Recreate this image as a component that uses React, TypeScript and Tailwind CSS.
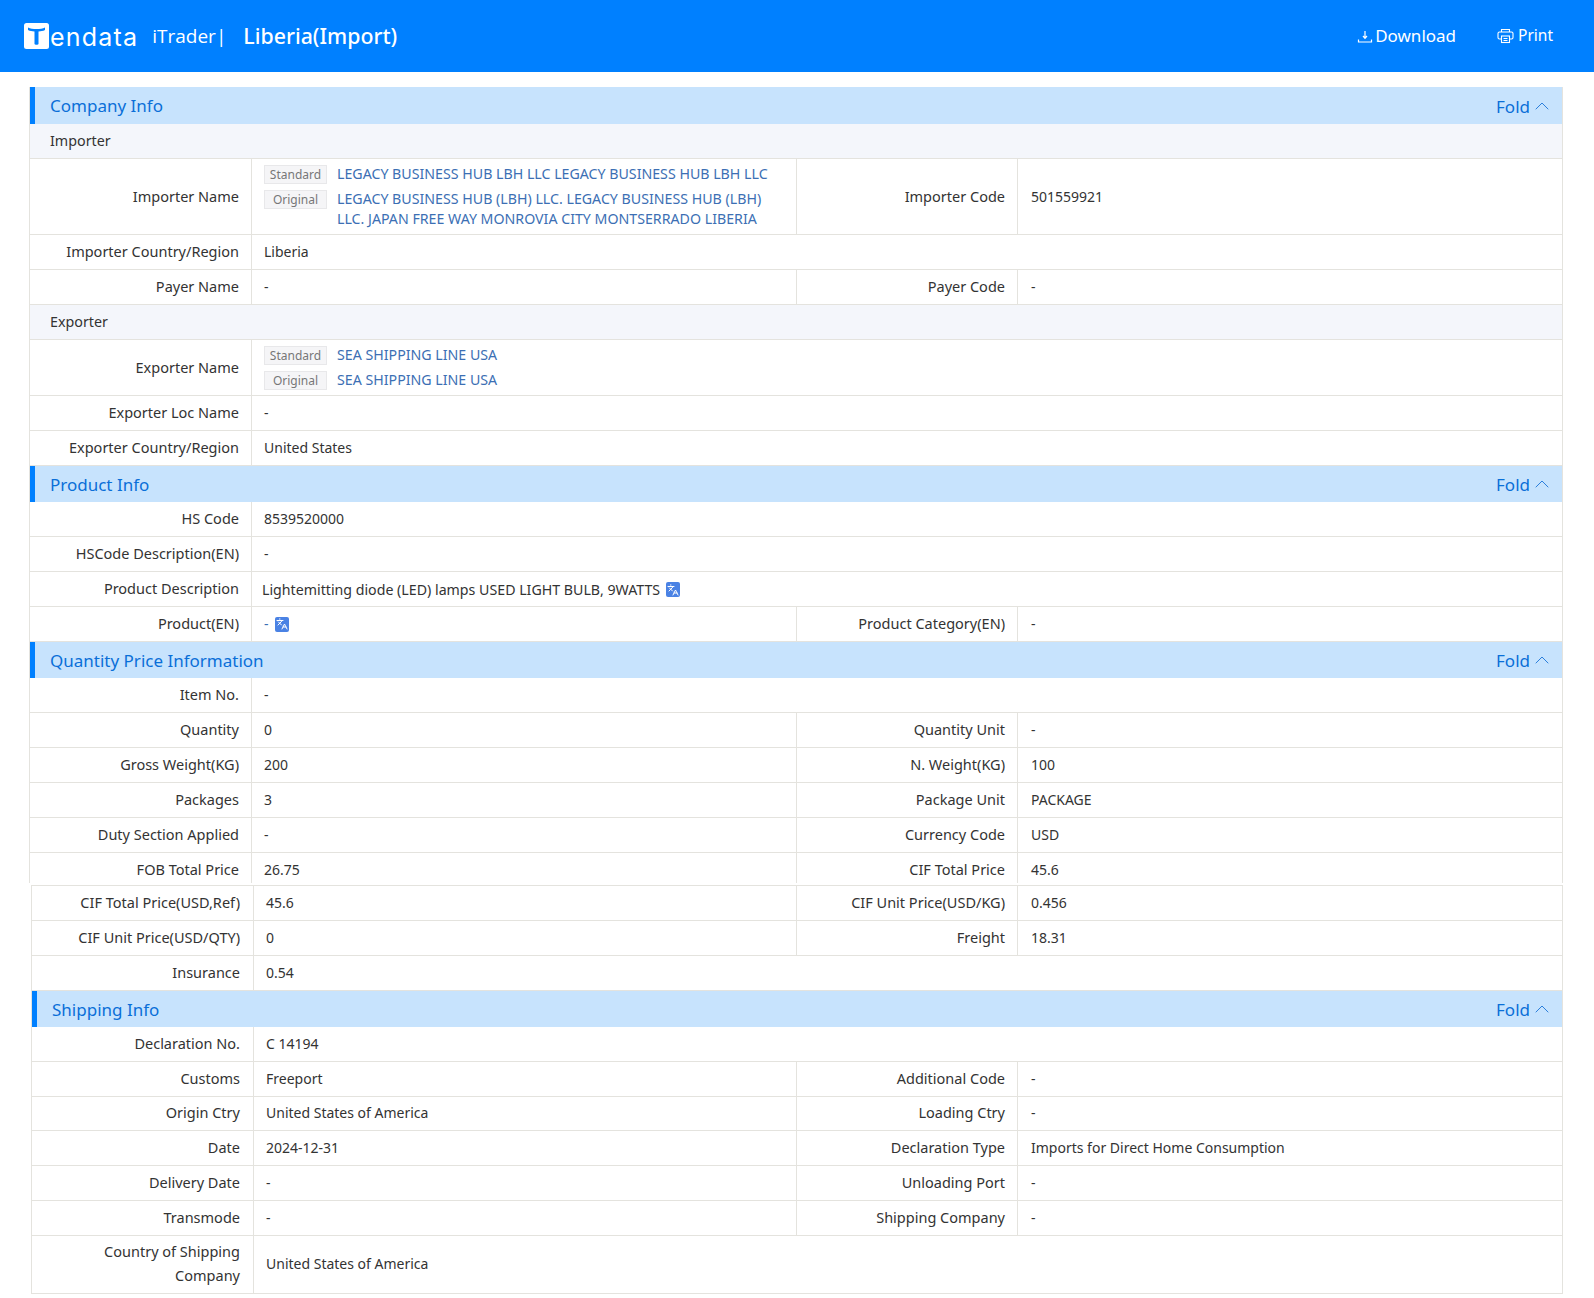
import React from "react";
import { ChevronUp, Languages } from "lucide-react";

const font = { fontFamily: '"Noto Sans", "Open Sans", sans-serif' };

function Fold() {
  return (
    <div className="flex items-center pr-[8px] text-[#0a6fd8]">
      <span className="pt-[2px] text-[17px]">Fold</span>
      <ChevronUp size={24} strokeWidth={1} className="text-[#2b7fdc]" />
    </div>
  );
}

function Head({ title, h = "h-[36px]" }: { title: string; h?: string }) {
  return (
    <div className={`flex items-center justify-between border-l-[5px] border-[#0080ff] bg-[#c7e3fd] pl-[15px] ${h}`}>
      <span className="pt-[1px] text-[17px] text-[#0a6fd8]">{title}</span>
      <Fold />
    </div>
  );
}

function Sub({ title }: { title: string }) {
  return (
    <div className="flex h-[35px] items-center border-b border-[#e4e3de] bg-[#f4f6fb] pl-[20px] text-[14.3px] text-[#333]">
      {title}
    </div>
  );
}

function Label({ text, alt, narrow, pt }: { text: string; alt?: boolean; narrow?: boolean; pt?: boolean }) {
  return (
    <div
      className={`flex shrink-0 items-center justify-end border-r border-[#e4e3de] pl-[30px] text-right text-[14.5px] leading-[24px] text-[#333] ${
        narrow ? "w-[221px] pr-[12px]" : alt ? "w-[222px] pr-[13px]" : "w-[222px] pr-[12px]"
      } ${pt ? "pt-[1px]" : "pb-[2px]"}`}
    >
      <span>{text}</span>
    </div>
  );
}

function Row({
  cells,
  alt,
  h = "h-[35px]",
  last,
}: {
  cells: [string, React.ReactNode][];
  alt?: boolean;
  h?: string;
  last?: boolean;
}) {
  const value = `flex items-center text-[14px] leading-[24px] text-[#333] ${last ? "pt-[3px]" : ""}`;
  return (
    <div className={`flex border-[#e4e3de] ${last ? "" : "border-b"} ${h}`}>
      <Label text={cells[0][0]} alt={alt} pt={last} />
      {cells.length === 1 ? (
        <div className={`${value} min-w-0 flex-1 pl-[12px]`}>{cells[0][1]}</div>
      ) : (
        <>
          <div className={`${value} border-r border-[#e4e3de] pl-[12px] ${alt ? "w-[543px]" : "w-[545px]"}`}>{cells[0][1]}</div>
          <Label text={cells[1][0]} narrow pt={last} />
          <div className={`${value} min-w-0 flex-1 pl-[13px]`}>{cells[1][1]}</div>
        </>
      )}
    </div>
  );
}

function Tag({ text }: { text: string }) {
  return (
    <span className="mt-[1px] flex h-[19px] w-[63px] shrink-0 items-center justify-center border border-[#e8e8ea] bg-[#f5f5f7] text-[12px] text-[#777]">
      {text}
    </span>
  );
}

function NameLine({ tag, text }: { tag: string; text: string }) {
  return (
    <div className="flex gap-[10px]">
      <Tag text={tag} />
      <span className="text-[14.2px] leading-[20px] text-[#3c6fb4]">{text}</span>
    </div>
  );
}

function Translate() {
  return (
    <span className="ml-[6px] inline-flex h-[15px] w-[14px] items-center justify-center rounded-[2px] bg-[#4a82e4] text-white">
      <Languages size={12} strokeWidth={2} />
    </span>
  );
}

export default function App() {
  return (
    <div className="min-h-[1298px] bg-white" style={font}>
      <header className="flex h-[72px] items-center justify-between bg-[#0080ff] pl-[24px] pr-[41px] text-white">
        <div className="flex items-center">
          <svg width="25" height="26" viewBox="0 0 25 26" className="shrink-0">
            <rect width="25" height="26" rx="2.5" fill="#fff" />
            <path d="M4 4.500c4 2 13 2 17 0v2.500c-2 1-4 1.300-6.500 1.400V21c0 1-4 1-4 0V8.400C8 8.300 6 8 4 7z" fill="#0080ff" />
          </svg>
          <span className="ml-[1px] pt-[3px] text-[25px] font-normal leading-none tracking-[1.2px]" style={{ fontFamily: '"Inter", sans-serif' }}>
            endata
          </span>
          <span className="ml-[14px] text-[19px] font-normal leading-none" style={{ fontFamily: '"Open Sans", sans-serif' }}>
            iTrader|
          </span>
          <span className="ml-[17px] text-[21.3px] font-medium">Liberia(Import)</span>
        </div>
        <div className="flex items-center">
          <svg width="16" height="16" viewBox="0 0 16 16" fill="none" stroke="#fff" strokeWidth="1.200" className="mr-[2px]">
            <path d="M8 3v7M6 8l2 2.300L10 8" />
            <path d="M1.500 11.500v2.500h13v-2.500" />
          </svg>
          <span className="text-[17px]">Download</span>
          <svg width="17" height="16" viewBox="0 0 17 16" fill="none" stroke="#fff" strokeWidth="1.100" className="ml-[41px] mr-[4px]">
            <path d="M4.500 4V1.500h8V4" />
            <rect x="1" y="4" width="15" height="7" rx="1.500" />
            <rect x="4.500" y="8" width="8" height="6.500" fill="#0080ff" />
            <path d="M6.500 10.500h4M6.500 12.500h4" />
          </svg>
          <span className="text-[15.5px]">Print</span>
        </div>
      </header>

      <div className="ml-[29px] mt-[15px] w-[1534px] border-x border-[#e4e3de]">
        <Head title="Company Info" h="h-[37px]" />
        <Sub title="Importer" />
        <Row
          h="h-[76px]"
          cells={[
            [
              "Importer Name",
              <div className="flex w-full flex-col gap-[5px] pr-[10px]">
                <NameLine tag="Standard" text="LEGACY BUSINESS HUB LBH LLC LEGACY BUSINESS HUB LBH LLC" />
                <NameLine tag="Original" text="LEGACY BUSINESS HUB (LBH) LLC. LEGACY BUSINESS HUB (LBH) LLC. JAPAN FREE WAY MONROVIA CITY MONTSERRADO LIBERIA" />
              </div>,
            ],
            ["Importer Code", "501559921"],
          ]}
        />
        <Row cells={[["Importer Country/Region", "Liberia"]]} />
        <Row cells={[["Payer Name", "-"], ["Payer Code", "-"]]} />
        <Sub title="Exporter" />
        <Row
          h="h-[56px]"
          cells={[
            [
              "Exporter Name",
              <div className="flex flex-col gap-[5px]">
                <NameLine tag="Standard" text="SEA SHIPPING LINE USA" />
                <NameLine tag="Original" text="SEA SHIPPING LINE USA" />
              </div>,
            ],
          ]}
        />
        <Row cells={[["Exporter Loc Name", "-"]]} />
        <Row cells={[["Exporter Country/Region", "United States"]]} />

        <Head title="Product Info" />
        <Row cells={[["HS Code", "8539520000"]]} />
        <Row cells={[["HSCode Description(EN)", "-"]]} />
        <Row
          cells={[
            [
              "Product Description",
              <span className="-ml-[2px] flex items-center pt-[1px] text-[14.2px]">
                Lightemitting diode (LED) lamps USED LIGHT BULB, 9WATTS
                <Translate />
              </span>,
            ],
          ]}
        />
        <Row
          cells={[
            [
              "Product(EN)",
              <span className="flex items-center text-[#3c6fb4]">
                -
                <Translate />
              </span>,
            ],
            ["Product Category(EN)", "-"],
          ]}
        />

        <Head title="Quantity Price Information" />
        <Row cells={[["Item No.", "-"]]} />
        <Row cells={[["Quantity", "0"], ["Quantity Unit", "-"]]} />
        <Row cells={[["Gross Weight(KG)", "200"], ["N. Weight(KG)", "100"]]} />
        <Row cells={[["Packages", "3"], ["Package Unit", "PACKAGE"]]} />
        <Row cells={[["Duty Section Applied", "-"], ["Currency Code", "USD"]]} />
        <Row last h="h-[30px]" cells={[["FOB Total Price", "26.75"], ["CIF Total Price", "45.6"]]} />
      </div>

      <div className="ml-[31px] mt-[2px] w-[1532px] border-x border-t border-[#e4e3de]">
        <Row alt cells={[["CIF Total Price(USD,Ref)", "45.6"], ["CIF Unit Price(USD/KG)", "0.456"]]} />
        <Row alt cells={[["CIF Unit Price(USD/QTY)", "0"], ["Freight", "18.31"]]} />
        <Row alt cells={[["Insurance", "0.54"]]} />
        <Head title="Shipping Info" />
        <Row alt h="h-[34.75px]" cells={[["Declaration No.", "C 14194"]]} />
        <Row alt h="h-[34.75px]" cells={[["Customs", "Freeport"], ["Additional Code", "-"]]} />
        <Row alt h="h-[34.75px]" cells={[["Origin Ctry", "United States of America"], ["Loading Ctry", "-"]]} />
        <Row alt h="h-[34.75px]" cells={[["Date", "2024-12-31"], ["Declaration Type", "Imports for Direct Home Consumption"]]} />
        <Row alt h="h-[34.75px]" cells={[["Delivery Date", "-"], ["Unloading Port", "-"]]} />
        <Row alt h="h-[34.75px]" cells={[["Transmode", "-"], ["Shipping Company", "-"]]} />
        <Row alt h="h-[58px]" cells={[["Country of Shipping Company", "United States of America"]]} />
      </div>
    </div>
  );
}
